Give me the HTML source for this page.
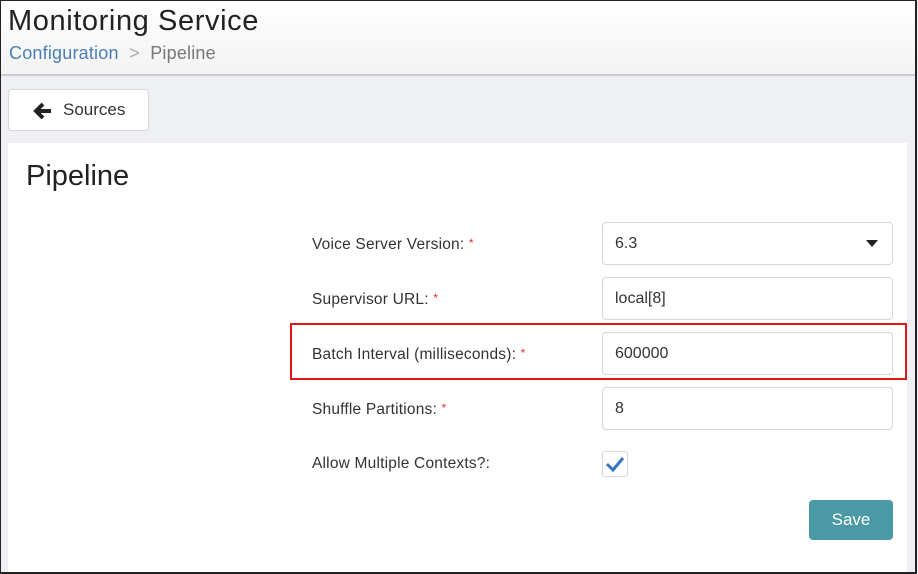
<!DOCTYPE html>
<html><head><meta charset="utf-8"><style>
*{box-sizing:border-box;margin:0;padding:0}
body{width:918px;height:574px;overflow:hidden;font-family:"Liberation Sans",sans-serif;background:#eff0f4;position:relative}
.frame{position:absolute;left:0;top:0;width:917px;height:574px;border:1px solid #222;border-right:2px solid #222;border-bottom:2px solid #222;z-index:10}
.hdr{position:absolute;left:0;top:0;width:915px;height:76px;background:linear-gradient(#fff,#f3f3f3);border-bottom:2px solid #ccc}
.t{position:absolute;left:8px;top:5px;font-size:29px;color:#222;letter-spacing:0.6px}
.bc{position:absolute;left:9px;top:43px;font-size:18px;color:#777;letter-spacing:0.2px}
.bc a{color:#4a7fb5}
.btn{position:absolute;left:8px;top:89px;width:141px;height:42px;background:#fff;border:1px solid #d8d8d8;border-radius:4px;font-size:17px;color:#333;padding:10px 0 0 54px}
.panel{position:absolute;left:8px;top:143px;width:899px;height:429px;background:#fff}
.h2{position:absolute;left:26px;top:160px;font-size:29px;color:#222}
.lbl{position:absolute;left:312px;font-size:15.5px;color:#333;letter-spacing:0.2px}
.lbl i{color:#d33;font-style:normal;font-size:12px;vertical-align:top}
.in{position:absolute;left:602px;width:291px;height:43px;border:1px solid #d6d6d6;border-radius:4px;font-size:16px;color:#333;padding:12px 0 0 12px}
.red{position:absolute;left:290px;top:323px;width:617px;height:57px;border:2px solid #d9161b}
.cb{position:absolute;left:602px;top:451px;width:26px;height:26px;border:1px solid #d6d6d6;border-radius:3px}
.save{position:absolute;left:809px;top:500px;width:84px;height:40px;background:#4a99a5;border-radius:4px;color:#fff;font-size:17px;text-align:center;line-height:40px}
</style></head><body>
<div class="hdr"></div>
<div class="t">Monitoring Service</div>
<div class="bc"><a>Configuration</a> &nbsp;<span style="color:#aaa">&gt;</span>&nbsp; Pipeline</div>
<div class="btn"><svg style="position:absolute;left:24px;top:12px" width="20" height="18" viewBox="0 0 20 18"><path d="M10 2 L3 9 L10 16 M3 9 H18" stroke="#222" stroke-width="4" fill="none" stroke-linejoin="miter"/></svg>Sources</div>
<div class="panel"></div>
<div class="h2">Pipeline</div>
<div class="lbl" style="top:236px">Voice Server Version: <i>*</i></div>
<div class="in" style="top:222px">6.3<svg style="position:absolute;right:14px;top:17px" width="12" height="7"><path d="M0 0H12L6 7Z" fill="#222"/></svg></div>
<div class="lbl" style="top:291px">Supervisor URL: <i>*</i></div>
<div class="in" style="top:277px">local[8]</div>
<div class="red"></div>
<div class="lbl" style="top:346px">Batch Interval (milliseconds): <i>*</i></div>
<div class="in" style="top:332px">600000</div>
<div class="lbl" style="top:401px">Shuffle Partitions: <i>*</i></div>
<div class="in" style="top:387px">8</div>
<div class="lbl" style="top:455px">Allow Multiple Contexts?:</div>
<div class="cb"><svg width="24" height="24"><path d="M4 12 L10 18 L20 6" stroke="#3a76c0" stroke-width="3" fill="none"/></svg></div>
<div class="save">Save</div>
<div class="frame"></div>
</body></html>
